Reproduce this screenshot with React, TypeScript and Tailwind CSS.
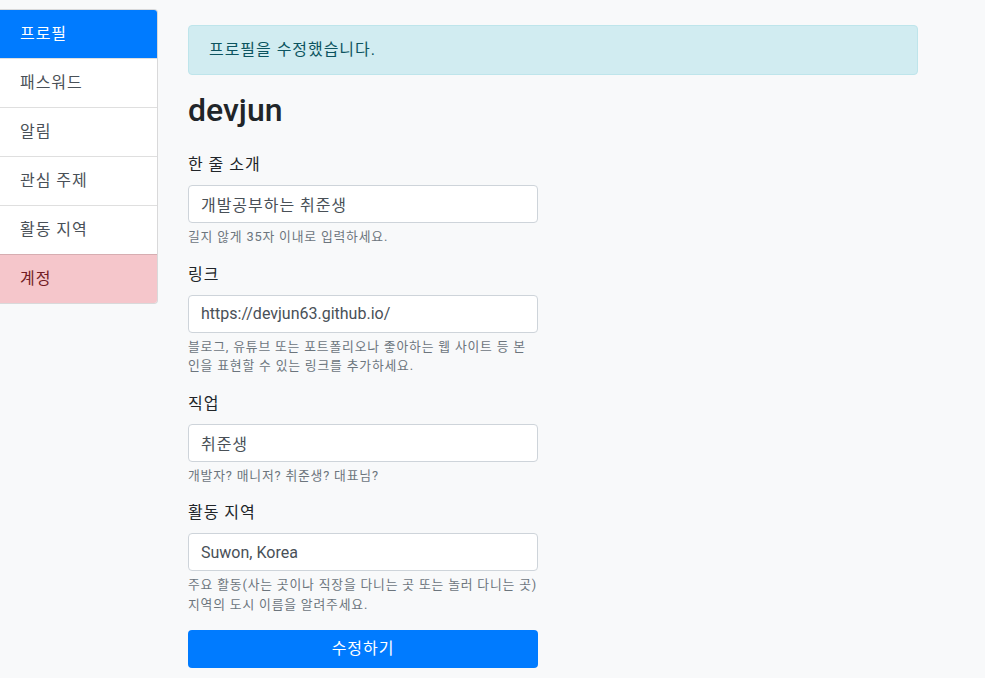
const items = [
  { label: "프로필", kind: "active" },
  { label: "패스워드", kind: "normal" },
  { label: "알림", kind: "normal" },
  { label: "관심 주제", kind: "normal" },
  { label: "활동 지역", kind: "normal" },
  { label: "계정", kind: "danger" },
];

const fields = [
  {
    label: "한 줄 소개",
    value: "개발공부하는 취준생",
    korean: true,
    help: "길지 않게 35자 이내로 입력하세요.",
  },
  {
    label: "링크",
    value: "https://devjun63.github.io/",
    korean: false,
    help: "블로그, 유튜브 또는 포트폴리오나 좋아하는 웹 사이트 등 본인을 표현할 수 있는 링크를 추가하세요.",
  },
  {
    label: "직업",
    value: "취준생",
    korean: true,
    help: "개발자? 매니저? 취준생? 대표님?",
  },
  {
    label: "활동 지역",
    value: "Suwon, Korea",
    korean: false,
    help: "주요 활동(사는 곳이나 직장을 다니는 곳 또는 놀러 다니는 곳) 지역의 도시 이름을 알려주세요.",
  },
];

function Sidebar() {
  return (
    <div className="w-[158px] shrink-0 self-start flex flex-col rounded-r-[4px] overflow-hidden border border-l-0 border-black/[0.125] tracking-[0.06em]">
      {items.map((item, i) => {
        let cls = "bg-white text-[#495057]";
        if (item.kind === "active") cls = "bg-[#007bff] text-white";
        if (item.kind === "danger") cls = "bg-[#f5c6cb] text-[#721c24]";
        return (
          <a
            key={item.label}
            href="#"
            className={`block pl-5 ${cls} ${
              i > 0 ? "h-[49px] leading-[48px] border-t border-black/[0.125]" : "h-[48px] leading-[48px]"
            }`}
          >
            {item.label}
          </a>
        );
      })}
    </div>
  );
}

export default function App() {
  return (
    <div
      className="min-h-screen bg-[#f8f9fa] text-[#212529] text-base leading-6 pt-[9px] flex"
      style={{ fontFamily: 'Roboto, "Noto Sans CJK KR", sans-serif' }}
    >
      <Sidebar />
      <main className="ml-[30px] pt-4 w-[730px]">
        <div className="rounded-[4px] border border-[#bee5eb] bg-[#d1ecf1] text-[#0c5460] px-5 py-3 tracking-[0.06em]">
          프로필을 수정했습니다.
        </div>
        <h2 className="mt-4 mb-2 text-[32px] leading-[38px] font-medium">
          devjun
        </h2>
        <form className="mt-6 w-[350px]">
          {fields.map((f) => (
            <div key={f.label} className="mb-4">
              <label className="block mb-2 tracking-[0.06em]">{f.label}</label>
              <input
                type="text"
                defaultValue={f.value}
                className={`block w-full h-[38px] px-3 bg-white border border-[#ced4da] rounded-[4px] text-[#495057] outline-none ${
                  f.korean ? "tracking-[0.06em]" : ""
                }`}
              />
              <small className="block mt-1 text-[12.8px] leading-[19.5px] text-[#6c757d] tracking-[0.065em]">
                {f.help}
              </small>
            </div>
          ))}
          <button
            type="button"
            className="block w-full h-[38px] rounded-[4px] bg-[#007bff] text-white tracking-[0.06em]"
          >
            수정하기
          </button>
        </form>
      </main>
    </div>
  );
}
